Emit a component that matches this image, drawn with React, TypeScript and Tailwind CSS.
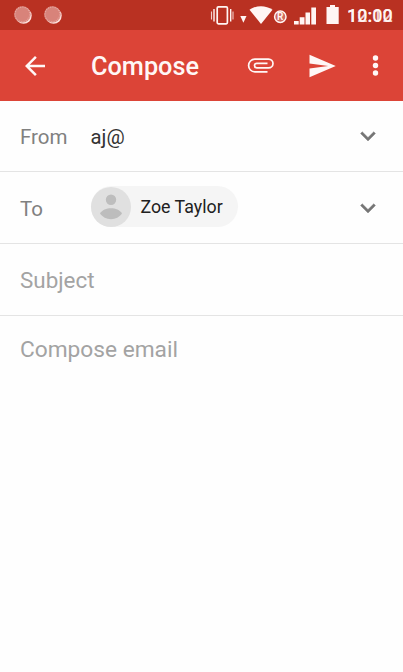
import React from 'react';

const StatusBar: React.FC = () => (
  <div className="flex h-[30px] shrink-0 items-center justify-between bg-[#b93122] pl-3.5 pr-[10px] text-[#fff5f3]">
    {/* Notifications */}
    <div className="flex gap-3">
      {[0, 1].map((n) => (
        <svg key={n} className="size-[18px]" viewBox="0 0 18 18">
          <circle cx="9.6" cy="9.7" r="8.1" fill="#fbe0dc" />
          <circle cx="8.4" cy="8.4" r="8.2" fill="#d8837a" />
          <circle cx="8.4" cy="8.4" r="7.4" fill="none" stroke="#e5a69f" strokeWidth="1.2" strokeDasharray="1.3 1" />
        </svg>
      ))}
    </div>

    {/* System icons */}
    <div className="flex items-center">
      <svg className="h-[30px] w-[132px]" viewBox="208 0 132 30" fill="currentColor">
        <rect x="217.2" y="6.8" width="10.2" height="17" rx="1.2" fill="none" stroke="currentColor" strokeWidth="1.7" />
        <path d="M214 9v12.5M230.7 9v12.5" stroke="currentColor" strokeWidth="1.4" />
        <path d="M211.5 11.5v8M233 11.5v8" stroke="currentColor" strokeWidth="1.1" opacity=".8" />
        <path d="M240.3 16h6.2l-3.1 6.8z" />
        <path d="M249.5 9.8C256 5 266 5 272.5 9.8L261 24z" />
        <circle cx="280.3" cy="16.8" r="5.7" fill="#cf6a5f" stroke="currentColor" strokeWidth="1.5" />
        <text x="280.3" y="20.4" textAnchor="middle" fontSize="10" fontWeight="600" fontFamily="Roboto, sans-serif">R</text>
        <path d="M294 21h4.7v3.4H294zM299.7 17.2h4.8v7.2h-4.8zM305.5 12.6h4.5v11.8h-4.5zM311.3 7.5h4.7v16.9h-4.7z" />
        <path d="M330 5h5v2h3.7v17h-12.2V7h3.5z" />
      </svg>
      <div className="relative top-px ml-[7px] w-[46px] text-[18px] leading-none font-medium">
        <span>10:00</span>
        <span className="absolute left-0 top-0 opacity-80">12:12</span>
      </div>
    </div>
  </div>
);

const AppBar: React.FC = () => (
  <header className="flex h-[70.5px] shrink-0 items-center bg-[#dc4437] pl-5 pr-3 text-[#fff7f6]">
    <button aria-label="Back" className="pt-px">
      <svg className="size-[30px]" viewBox="0 0 24 24" fill="currentColor">
        <path d="M20 11H7.83l5.59-5.59L12 4l-8 8 8 8 1.41-1.41L7.83 13H20v-2z" />
      </svg>
    </button>
    <h1 className="ml-[41px] flex-1 pt-[3px] text-[25.3px] font-medium">Compose</h1>
    <button aria-label="Attach file">
      <svg className="h-5 w-[28px]" viewBox="0 0 28 20" fill="none" stroke="currentColor" strokeWidth="1.7">
        <path d="M20.5 16.9H7.8a6.2 6.4 0 0 1 0-12.8h13.7a4.5 4.4 0 0 1 0 8.800H9.800a2.300 2.300 0 0 1 0-4.600h10.700" />
      </svg>
    </button>
    <button aria-label="Send" className="ml-8 pt-px">
      <svg className="size-[30px]" viewBox="0 0 24 24" fill="currentColor">
        <path d="M2.01 21L23 12 2.01 3 2 10l15 2-15 2z" />
      </svg>
    </button>
    <button aria-label="More options" className="ml-[23px]">
      <svg className="size-[31px]" viewBox="0 0 24 24" fill="currentColor">
        <circle cx="12" cy="6.2" r="2.1" />
        <circle cx="12" cy="12" r="2.1" />
        <circle cx="12" cy="17.8" r="2.1" />
      </svg>
    </button>
  </header>
);

const Chevron: React.FC = () => (
  <svg className="mt-px size-[30px]" viewBox="0 0 24 24" fill="#757575" stroke="#757575" strokeWidth="0.3">
    <path d="M16.59 8.59L12 13.17 7.41 8.59 6 10l6 6 6-6z" />
  </svg>
);

type FieldProps = { label: string; children: React.ReactNode };

const Field: React.FC<FieldProps> = ({ label, children }) => (
  <div className="flex h-[71.7px] shrink-0 items-center border-b border-[#e4e4e4] px-5">
    <span className="w-[70.5px] pt-[3px] text-[20.5px] text-[#808080]">{label}</span>
    <div className="flex-1">{children}</div>
    <Chevron />
  </div>
);

const App: React.FC = () => {
  return (
    <div className="flex h-screen flex-col bg-[#fefefe] font-[Roboto,sans-serif]">
      <StatusBar />
      <AppBar />

      <Field label="From">
        <div className="pt-[2px] text-[20.3px] text-[#333]">aj@</div>
      </Field>

      <Field label="To">
        <div className="mb-[2px] flex h-[41px] w-[147.5px] items-center rounded-full bg-[#f5f5f5]">
          <svg className="size-[40px]" viewBox="0 0 40 40">
            <circle cx="20" cy="20" r="20" fill="#e0e0e0" />
            <circle cx="20" cy="12.8" r="5.2" fill="#bdbdbd" />
            <path d="M9 26.5c2-3.5 6.5-5.3 11-5.3s9 1.8 11 5.3c-2.4 3.5-6.5 5.7-11 5.7s-8.6-2.2-11-5.7z" fill="#bdbdbd" />
          </svg>
          <span className="ml-2.5 pt-px text-[17.8px] text-[#212121]">Zoe Taylor</span>
        </div>
      </Field>

      <input
        className="h-[72px] shrink-0 border-b border-[#e4e4e4] px-5 pt-px text-[22.4px] outline-none placeholder:text-[#a3a3a3]"
        placeholder="Subject"
      />
      <textarea
        className="flex-1 resize-none px-5 pt-[17px] text-[22.7px] outline-none placeholder:text-[#a3a3a3]"
        placeholder="Compose email"
      />
    </div>
  );
};

export default App;
